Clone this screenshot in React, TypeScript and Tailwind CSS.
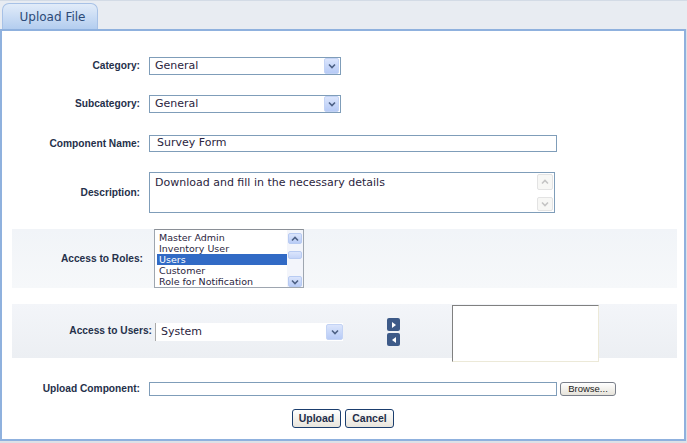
import React from 'react';

const labelCls = "text-right font-bold text-[10.2px] text-[#25304a] font-['Liberation_Sans',Arial,sans-serif]";
const fieldCls = "font-['DejaVu_Sans',Verdana,sans-serif] text-[11px] text-[#2b2540]";

function Chevron({ dir = 'down', color = '#4d6185' }: { dir?: 'down' | 'up'; color?: string }) {
	return (
		<svg width="8" height="6" viewBox="0 0 8 6">
			<polyline
				points={dir === 'down' ? '1,1.5 4,4.5 7,1.5' : '1,4.5 4,1.5 7,4.5'}
				fill="none"
				stroke={color}
				strokeWidth="1.6"
			/>
		</svg>
	);
}

function ArrowBtn({ className = '' }: { className?: string }) {
	return (
		<span className={`flex h-[16px] w-[15px] items-center justify-center rounded-[2px] border border-[#c3d3f5] bg-gradient-to-b from-[#dbe5fc] to-[#b7cbf6] ${className}`}>
			<Chevron />
		</span>
	);
}

function Select({ value }: { value: string }) {
	return (
		<div className="flex h-[18px] w-[192px] items-center border border-[#7f9db9] bg-white">
			<span className={`flex-1 pl-[5px] pt-[1px] ${fieldCls}`}>{value}</span>
			<ArrowBtn className="mr-[1px]" />
		</div>
	);
}

function Row({ label, children, className = '' }: { label: string; children: React.ReactNode; className?: string }) {
	return (
		<div className={`flex items-center ${className}`}>
			<div className={`w-[147px] pr-[9px] ${labelCls}`}>{label}</div>
			{children}
		</div>
	);
}

const roles = ['Master Admin', 'Inventory User', 'Users', 'Customer', 'Role for Notification'];

export default function App() {
	return (
		<div className="h-[443px] w-[687px] overflow-hidden bg-[#dde1e7]">
			{/* Tab strip */}
			<div className="flex h-[29px] items-end border-t border-[#d3dbe6] bg-[#e8ecf2] pl-[2px]">
				<div className="flex h-[26px] w-[96px] items-center justify-center rounded-t-[7px] border border-b-0 border-[#a7c1e6] bg-gradient-to-b from-[#e2ecf9] to-[#b3cdef] pl-[5px] font-['DejaVu_Sans',Verdana,sans-serif] text-[12px] text-[#2c4a77]">
					Upload File
				</div>
			</div>

			{/* Panel */}
			<div className="flex h-[412px] w-[686px] flex-col border-2 border-[#8fb1de] bg-white">
				<Row label="Category:" className="mt-[26px]">
					<Select value="General" />
				</Row>
				<Row label="Subcategory:" className="mt-[20px]">
					<Select value="General" />
				</Row>
				<Row label="Component Name:" className="mt-[22px]">
					<div className={`flex h-[17px] w-[408px] items-center border border-[#7f9db9] pl-[7px] ${fieldCls}`}>Survey Form</div>
				</Row>
				<Row label="Description:" className="mt-[20px]">
					<div className="flex h-[41px] w-[406px] border border-[#7f9db9] bg-white">
						<div className={`flex-1 pl-[5px] pt-[3px] leading-[14px] ${fieldCls}`}>Download and fill in the necessary details</div>
						<div className="mr-[1px] mt-[1px] flex w-[16px] flex-col justify-between pb-[1px]">
							<span className="flex h-[16px] items-center justify-center rounded-[2px] border border-[#e3e3e3] bg-[#f7f7f5]">
								<Chevron dir="up" color="#c4c4c4" />
							</span>
							<span className="flex h-[14px] items-center justify-center rounded-[2px] border border-[#e3e3e3] bg-[#f7f7f5]">
								<Chevron color="#c4c4c4" />
							</span>
						</div>
					</div>
				</Row>

				{/* Access to Roles */}
				<div className="ml-[10px] mr-[7px] mt-[16px] flex h-[59px] items-center bg-gradient-to-b from-[#f1f4f8] to-[#f6f8fa]">
					<div className={`w-[142px] pr-[11px] ${labelCls}`}>Access to Roles:</div>
					<div className="flex h-[59px] w-[150px] border border-[#9ea6b0] border-t-[#8a8f96] bg-white">
						<div className="flex-1 pl-[2px] pt-[2px]">
							{roles.map((r) => (
								<div
									key={r}
									className={`h-[11px] pl-[2px] font-['DejaVu_Sans',Verdana,sans-serif] text-[9.5px] leading-[11px] ${
										r === 'Users' ? 'bg-[#316ac5] text-white' : 'text-[#2b2540]'
									}`}
								>
									{r}
								</div>
							))}
						</div>
						<div className="flex w-[16px] flex-col items-center bg-[#f3f5fb] pt-[3px]">
							<span className="flex h-[11px] w-[14px] items-center justify-center rounded-[2px] border border-[#b8cbf2] bg-gradient-to-b from-[#dbe5fc] to-[#b9ccf6]">
								<Chevron dir="up" />
							</span>
							<span className="mt-[7px] h-[8px] w-[14px] rounded-[2px] border border-[#b8cbf2] bg-gradient-to-b from-[#dbe5fc] to-[#c4d4f8]" />
							<span className="mt-[17px] flex h-[11px] w-[14px] items-center justify-center rounded-[2px] border border-[#b8cbf2] bg-gradient-to-b from-[#dbe5fc] to-[#b9ccf6]">
								<Chevron />
							</span>
						</div>
					</div>
				</div>

				{/* Access to Users */}
				<div className="ml-[10px] mr-[7px] mt-[16px] flex h-[54px] items-center bg-gradient-to-b from-[#f3f5f9] to-[#eceff3]">
					<div className={`w-[143px] pr-[3px] ${labelCls}`}>Access to Users:</div>
					<div className="mt-[2px] flex h-[18px] w-[188px] items-center border-l border-[#a9a9a9] bg-white">
						<span className={`flex-1 pl-[5px] pt-[1px] ${fieldCls}`}>System</span>
						<ArrowBtn className="h-[14px] w-[17px]" />
					</div>
					<div className="ml-[44px] mt-[2px] flex flex-col gap-[2px]">
						<span className="flex h-[13px] w-[13px] items-center justify-center rounded-[2px] bg-[#3d5a88]">
							<svg width="4" height="6" viewBox="0 0 4 6"><polygon points="0,0 4,3 0,6" fill="white" /></svg>
						</span>
						<span className="flex h-[13px] w-[13px] items-center justify-center rounded-[2px] bg-[#3d5a88]">
							<svg width="4" height="6" viewBox="0 0 4 6"><polygon points="4,0 0,3 4,6" fill="white" /></svg>
						</span>
					</div>
					<div className="ml-[52px] mt-[1px] h-[57px] w-[147px] self-start border border-[#ece9d8] border-l-[#808080] border-t-[#808080] bg-white" />
				</div>

				<Row label="Upload Component:" className="mt-[23px]">
					<div className="h-[14px] w-[408px] border border-[#7f9db9] bg-white" />
					<div className="ml-[3px] flex h-[14px] w-[56px] items-center justify-center rounded-[3px] border border-[#7a7f8a] bg-gradient-to-b from-white to-[#e6e3da] font-['Liberation_Sans',Arial,sans-serif] text-[9.5px] text-[#222]">
						Browse...
					</div>
				</Row>

				<div className="mt-[13px] flex justify-center gap-[4px]">
					{['Upload', 'Cancel'].map((b) => (
						<div
							key={b}
							className="flex h-[19px] w-[49px] items-center justify-center rounded-[3px] border border-[#1b3e6e] bg-gradient-to-b from-white to-[#e8e5dc] font-['Liberation_Sans',Arial,sans-serif] text-[10.5px] font-bold text-[#1f2d4a]"
						>
							{b}
						</div>
					))}
				</div>
			</div>
		</div>
	);
}
